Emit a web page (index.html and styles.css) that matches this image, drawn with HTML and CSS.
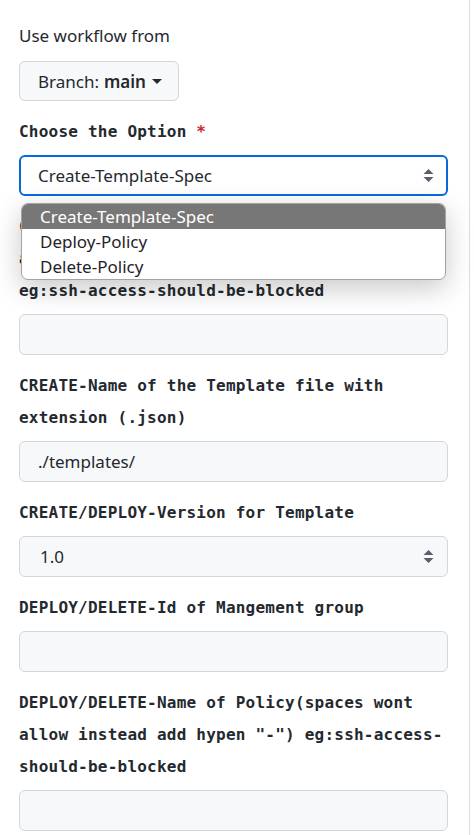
FILE: index.html
```html
<!DOCTYPE html>
<html>
<head>
<meta charset="utf-8">
<link rel="stylesheet" href="styles.css">
</head>
<body>
<div class="panel">
  <div class="heading">Use workflow from</div>
  <div class="branch">Branch: <b>main</b><span class="caret"></span></div>

  <div class="field">
    <label class="lbl">Choose the Option <span class="req">*</span></label>
    <div class="select focused">
      <span>Create-Template-Spec</span>
      <svg class="arrows" width="11" height="15" viewBox="0 0 11 15"><path d="M5.5 1 L10.5 6 L0.5 6 Z M5.5 14 L10.5 9 L0.5 9 Z" fill="#57606a"/></svg>
    </div>
    <ul class="popup">
      <li class="active">Create-Template-Spec</li>
      <li>Deploy-Policy</li>
      <li>Delete-Policy</li>
    </ul>
  </div>

  <div class="field">
    <label class="lbl">CREATE-Display Name of Policy(spaces not allowed instead add hypen "-") <span class="nw">eg:ssh-access-should-be-blocked</span></label>
    <div class="input"></div>
  </div>

  <div class="field">
    <label class="lbl">CREATE-Name of the Template file with extension (.json)</label>
    <div class="input"><span>./templates/</span></div>
  </div>

  <div class="field">
    <label class="lbl">CREATE/DEPLOY-Version for Template</label>
    <div class="select">
      <span class="ver">1.0</span>
      <svg class="arrows" width="11" height="15" viewBox="0 0 11 15"><path d="M5.5 1 L10.5 6 L0.5 6 Z M5.5 14 L10.5 9 L0.5 9 Z" fill="#57606a"/></svg>
    </div>
  </div>

  <div class="field">
    <label class="lbl">DEPLOY/DELETE-Id of Mangement group</label>
    <div class="input"></div>
  </div>

  <div class="field">
    <label class="lbl">DEPLOY/DELETE-Name of Policy(spaces wont allow instead add hypen "-") eg:ssh-access-should-be-blocked</label>
    <div class="input"></div>
  </div>
</div>
</body>
</html>
```
FILE: styles.css
```css
html, body {
  margin: 0;
  padding: 0;
  background: #ffffff;
}
body {
  font-family: "Noto Sans", "Open Sans", sans-serif;
  color: #24292f;
}
.panel {
  width: 429px;
  padding: 24px 21px 4px 19px;
  border-right: 1px solid #d8dee4;
  box-sizing: content-box;
}
.heading {
  font-size: 17px;
  line-height: 24px;
  margin-bottom: 13px;
}
.branch {
  display: inline-flex;
  align-items: center;
  height: 40px;
  box-sizing: border-box;
  padding: 0 16px 0 18px;
  background: #f6f8fa;
  border: 1px solid #d0d7de;
  border-radius: 6px;
  font-size: 17px;
}
.branch b {
  font-weight: 600;
  margin-left: 5px;
}
.caret {
  display: inline-block;
  width: 0;
  height: 0;
  margin-left: 6px;
  border-left: 5.5px solid transparent;
  border-right: 5.5px solid transparent;
  border-top: 5.5px solid #24292f;
}
.field {
  position: relative;
}
.lbl {
  display: block;
  margin-top: 15px;
  margin-bottom: 7px;
  font-family: "DejaVu Sans Mono", monospace;
  font-weight: bold;
  font-size: 16px;
  letter-spacing: 0.22px;
  line-height: 32px;
  color: #24292f;
}
.req {
  color: #cf222e;
}
.nw {
  white-space: nowrap;
}
.input, .select {
  height: 41px;
  box-sizing: border-box;
  background: #f6f8fa;
  border: 1px solid #d0d7de;
  border-radius: 6px;
  display: flex;
  align-items: center;
  padding: 0 13px 0 18px;
  font-size: 17px;
}
.select {
  justify-content: space-between;
}
.arrows {
  display: block;
}
.select.focused {
  background: #ffffff;
  border: 2px solid #0969da;
  padding-left: 17px;
  padding-right: 12px;
}
.ver {
  padding-left: 2px;
}
.popup {
  position: absolute;
  left: 2px;
  right: 2px;
  top: 87px;
  margin: 0;
  padding: 0;
  list-style: none;
  background: #ffffff;
  border: 1px solid #a3a3a3;
  border-radius: 7px;
  overflow: hidden;
  box-shadow: 0 8px 28px rgba(0, 0, 0, 0.22);
  z-index: 5;
}
.popup li {
  height: 25px;
  line-height: 25px;
  padding-left: 18px;
  font-size: 17px;
  color: #1f2328;
}
.popup li.active {
  background: #777777;
  color: #ffffff;
}
```
